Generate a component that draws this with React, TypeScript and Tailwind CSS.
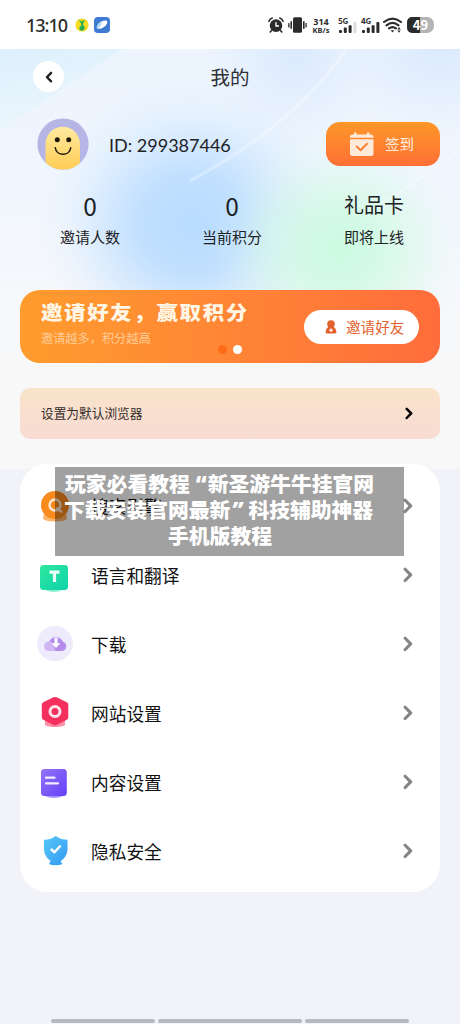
import type { ReactNode } from "react";

const Chevron = ({ className }: { className: string }) => (
  <svg viewBox="0 0 8 13" fill="none" stroke="currentColor" className={className}>
    <path d="M1.7 1.8L6.2 6.4L1.7 11" strokeWidth="2.5" strokeLinecap="round" strokeLinejoin="round" />
  </svg>
);

const SignalBars = ({ label, weak }: { label: string; weak?: boolean }) => (
  <div className="flex h-4 w-[19px] flex-col">
    <span className="h-[7px] text-[8px] leading-[7px] font-bold tracking-[-0.3px]">{label}</span>
    <svg viewBox="0 0 19 11" className="-mt-[2px] h-[11px] w-[19px]" fill="#2b2b2b">
      <rect x="1" y="8" width="3" height="3" rx="1" />
      <rect x="5.8" y="5.5" width="3" height="5.5" rx="1" />
      <rect x="10.6" y="3.2" width="3" height="7.8" rx="1" />
      <rect x="15.4" y="0" width="3" height="11" rx="1" fill={weak ? "#dcdcdc" : "#2b2b2b"} />
    </svg>
  </div>
);

const StatusBar = () => (
  <div className="flex h-[49px] items-center bg-white pt-[1px] pr-[26px] pl-[26px] text-[#2b2b2b]">
    <span className="w-[49px] font-['Noto_Sans','Noto_Sans_CJK_SC',sans-serif] text-[18px] leading-none font-medium tracking-[-1px]">
      13:10
    </span>
    <svg viewBox="0 0 14 14" className="h-[14px] w-[14px]">
      <circle cx="7" cy="7" r="6.6" fill="#f5dc22" />
      <path
        d="M3.6 1.6L6.6 3.4L10 1.6L8.6 4.6Q7.6 5.6 8.3 7.6Q10 8.4 9.7 10.6Q9 12.8 6.6 12.7Q4 12.2 4.2 9.8Q4.8 8 6.4 7.7L5.8 5Z"
        fill="#24ad54"
      />
    </svg>
    <svg viewBox="0 0 16 16" className="ml-[5px] h-4 w-4">
      <rect width="16" height="16" rx="4" fill="#3f7bd2" />
      <path d="M2.8 10.6C3.2 6.6 7.2 3.6 11.6 3.6C13.4 3.6 13.6 4.8 13 6.4C11.6 9.6 8.2 11.6 4.8 11.8C3.4 11.8 2.8 11.4 2.8 10.6Z" fill="#fff" />
      <path d="M2.8 10.6C3 8 5.4 5.6 8 5.2C7.6 8 6 10.4 3.4 11.6C3 11.4 2.8 11.2 2.8 10.6Z" fill="#a9dcfb" />
    </svg>
    <div className="ml-auto flex items-center">
      <svg viewBox="0 0 16 16" className="h-4 w-4" fill="none" stroke="#2b2b2b">
        <circle cx="8" cy="8.6" r="6.3" fill="#2b2b2b" stroke="none" />
        <path d="M0.9 4.2Q1.8 1.8 4.2 1M15.1 4.2Q14.2 1.8 11.8 1M3.8 13.2L2.2 15M12.2 13.2L13.8 15" strokeWidth="1.6" strokeLinecap="round" />
        <path d="M8 5.2V9H11" stroke="#fff" strokeWidth="1.4" />
      </svg>
      <svg viewBox="0 0 19 16" className="ml-[4px] h-4 w-[19px]" fill="#2b2b2b">
        <rect x="5" y="0.3" width="9" height="15.4" rx="1.5" />
        <rect x="2.4" y="4" width="1.6" height="8" rx="0.8" />
        <rect x="15" y="4" width="1.6" height="8" rx="0.8" />
        <rect x="0.2" y="6" width="1.3" height="4.5" rx="0.6" />
        <rect x="17.4" y="6" width="1.3" height="4.5" rx="0.6" />
      </svg>
      <div className="ml-[3px] w-[22px] text-center font-['Noto_Sans',sans-serif] font-bold">
        <div className="text-[9px] leading-[9px]">314</div>
        <div className="text-[7.5px] leading-[8px]">KB/s</div>
      </div>
      <div className="ml-[6px]">
        <SignalBars label="5G" weak />
      </div>
      <div className="ml-[4px]">
        <SignalBars label="4G" />
      </div>
      <svg viewBox="0 0 20 16" className="ml-[3px] h-4 w-5" fill="none" stroke="#2b2b2b" strokeWidth="2.1">
        <path d="M1 5Q9.5 -1.8 18 5M3.5 8.3Q9.5 3.6 15.5 8.3M6 11.4Q9.5 8.8 13 11.4" strokeLinecap="round" />
        <path d="M7.6 13.2H11.4L9.5 15.6Z" fill="#2b2b2b" stroke="none" />
        <path d="M14.3 12.4L16 10L17.7 12.4ZM14.3 13.4L16 15.8L17.7 13.4Z" fill="#2b2b2b" stroke="none" />
      </svg>
      <div className="ml-[4px] flex h-4 w-[27px] items-center justify-center rounded-l-[5px] rounded-r-[7px] bg-linear-to-r from-[#2b2b2b] from-48% to-[#b4b4b4] to-48% text-[13px] font-bold text-white">
        49
      </div>
    </div>
  </div>
);

const Stat = ({ value, label }: { value: ReactNode; label: string }) => (
  <div className="flex w-[142px] flex-col items-center text-[#1d2226]">
    <div className="flex h-[30px] items-center">{value}</div>
    <div className="mt-[3px] text-[15px] leading-[24px]">{label}</div>
  </div>
);

const HeaderBackdrop = () => (
  <svg viewBox="0 0 460 420" className="absolute inset-0 -z-10 h-[420px] w-[460px]">
    <defs>
      <linearGradient id="base" x1="0" y1="0" x2="0" y2="1">
        <stop offset="0" stopColor="#ecf4fe" />
        <stop offset="0.3" stopColor="#f0f6fe" />
        <stop offset="0.6" stopColor="#f6f8fb" />
        <stop offset="0.8" stopColor="#f8f8f8" />
      </linearGradient>
      <linearGradient id="corner" x1="0" y1="0" x2="0.3" y2="1">
        <stop offset="0" stopColor="#ddf0fc" />
        <stop offset="1" stopColor="#ecf6fd" />
      </linearGradient>
      <radialGradient id="blue">
        <stop offset="0" stopColor="#b8dcff" />
        <stop offset="0.35" stopColor="#bbddff" stopOpacity="0.88" />
        <stop offset="0.6" stopColor="#c2e0ff" stopOpacity="0.52" />
        <stop offset="0.8" stopColor="#cae4ff" stopOpacity="0.2" />
        <stop offset="1" stopColor="#d5e9ff" stopOpacity="0" />
      </radialGradient>
      <radialGradient id="green">
        <stop offset="0" stopColor="#cbfae0" />
        <stop offset="0.3" stopColor="#cffae3" stopOpacity="0.85" />
        <stop offset="0.6" stopColor="#d5fae6" stopOpacity="0.48" />
        <stop offset="0.8" stopColor="#dcfaec" stopOpacity="0.18" />
        <stop offset="1" stopColor="#e5faf0" stopOpacity="0" />
      </radialGradient>
      <radialGradient id="sky">
        <stop offset="0" stopColor="#dbe9fd" />
        <stop offset="0.5" stopColor="#e0edfd" stopOpacity="0.6" />
        <stop offset="1" stopColor="#e6f1fe" stopOpacity="0" />
      </radialGradient>
    </defs>
    <rect width="460" height="420" fill="url(#base)" />
    <path d="M0 0H122L0 82Z" fill="url(#corner)" />
    <ellipse cx="295" cy="5" rx="90" ry="100" fill="url(#sky)" />
    <ellipse cx="440" cy="0" rx="120" ry="90" fill="url(#sky)" />
    <ellipse cx="192" cy="175" rx="155" ry="145" fill="url(#blue)" />
    <ellipse cx="340" cy="200" rx="130" ry="120" fill="url(#green)" />
    <path d="M346 0Q300 72 190 132" fill="none" stroke="#fff" strokeOpacity="0.2" strokeWidth="4" />
    <path d="M346 0Q300 72 190 132" fill="none" stroke="#fff" strokeOpacity="0.2" strokeWidth="1.5" />
    <path d="M460 100Q430 125 375 158" fill="none" stroke="#fff" strokeOpacity="0.35" strokeWidth="2" />
  </svg>
);

const SearchIcon = () => (
  <svg viewBox="0 0 36 36" className="h-9 w-9">
    <path d="M7 25H29L30 31Q27 33.5 18 33.5T6 31Z" fill="#ffb46b" />
    <circle cx="18" cy="17" r="14" fill="#f98a1c" />
    <circle cx="18" cy="17" r="5.5" fill="none" stroke="#ffe9d2" strokeWidth="2.4" />
    <path d="M20 20.5L24 23.5" stroke="#ffe9d2" strokeWidth="2.4" strokeLinecap="round" />
  </svg>
);

const TranslateIcon = () => (
  <svg viewBox="0 0 36 36" className="h-9 w-9">
    <defs>
      <linearGradient id="mint" x1="0" y1="0" x2="1" y2="1">
        <stop offset="0" stopColor="#2ee79e" />
        <stop offset="1" stopColor="#0ed3ab" />
      </linearGradient>
    </defs>
    <path d="M6 31H28Q24 35 17 35T6 31Z" fill="#8ff0d2" />
    <rect x="3" y="8" width="28" height="25" rx="3.5" fill="url(#mint)" />
    <path d="M12.5 15.2H22.5M17.5 15.2V25" stroke="#eafff7" strokeWidth="3.2" />
  </svg>
);

const DownloadIcon = () => (
  <svg viewBox="0 0 36 36" className="h-9 w-9">
    <circle cx="18" cy="17.5" r="17.8" fill="#eeebfd" />
    <path d="M12 25V16A7.6 7.6 0 0 1 26 15.8A4.8 4.8 0 0 1 25.5 25Z" fill="#b68ceb" />
    <path d="M12 25A4.8 4.8 0 1 1 16.2 18L18.5 25Z" fill="#d1b6f5" />
    <path d="M19 11.8V19" stroke="#fff" strokeWidth="3" />
    <path d="M14.6 17.2H23.4L19 22Z" fill="#fff" />
  </svg>
);

const SiteIcon = () => (
  <svg viewBox="0 0 36 36" className="h-9 w-9">
    <path d="M8 25H28V30Q25 32 18 32T8 30Z" fill="#ff8fa6" />
    <path
      d="M16.4 2.3Q18 1.5 19.6 2.3L29.8 7.2Q31.3 8 31.3 9.7V22.3Q31.3 24 29.8 24.8L19.6 30.1Q18 31 16.4 30.1L6.3 24.8Q4.8 24 4.8 22.3V9.7Q4.8 8 6.3 7.2Z"
      fill="#f5305f"
    />
    <circle cx="18" cy="16.5" r="5" fill="none" stroke="#ffe3ea" strokeWidth="3" />
  </svg>
);

const ContentIcon = () => (
  <svg viewBox="0 0 36 36" className="h-9 w-9">
    <defs>
      <linearGradient id="violet" x1="0" y1="0" x2="1" y2="1">
        <stop offset="0" stopColor="#9375f8" />
        <stop offset="1" stopColor="#6440f8" />
      </linearGradient>
    </defs>
    <path d="M5 30H29Q24 34 17 34T5 30Z" fill="#a895ff" />
    <rect x="4" y="5" width="25.8" height="27" rx="3.5" fill="url(#violet)" />
    <path d="M9 13.7H17.5M9 19.3H21" stroke="#f2eeff" strokeWidth="2.2" strokeLinecap="round" />
  </svg>
);

const PrivacyIcon = () => (
  <svg viewBox="0 0 36 36" className="h-9 w-9">
    <defs>
      <linearGradient id="shield" x1="0" y1="0" x2="1" y2="1">
        <stop offset="0" stopColor="#55c8f7" />
        <stop offset="1" stopColor="#359af4" />
      </linearGradient>
    </defs>
    <path d="M14 27.5H23L25.5 31Q23 32.3 18.5 32.3T12 31Z" fill="#3da5f5" />
    <path d="M18.8 3Q23 6.5 30.5 6.8V17Q30 26 18.8 31Q7.5 26 7 17V6.8Q14.5 6.5 18.8 3Z" fill="url(#shield)" />
    <path d="M14.5 16.5L17.5 19.3L23 13.3" fill="none" stroke="#fff" strokeWidth="2.4" strokeLinecap="round" strokeLinejoin="round" />
  </svg>
);

const menuItems = [
  { label: "搜索引擎", icon: <SearchIcon /> },
  { label: "语言和翻译", icon: <TranslateIcon /> },
  { label: "下载", icon: <DownloadIcon /> },
  { label: "网站设置", icon: <SiteIcon /> },
  { label: "内容设置", icon: <ContentIcon /> },
  { label: "隐私安全", icon: <PrivacyIcon /> },
];

const App = () => {
  return (
    <div className="relative h-[1024px] w-[460px] overflow-hidden bg-[#f2f3f8] font-['Noto_Sans_CJK_SC',sans-serif]">
      <StatusBar />

      <header className="relative isolate h-[420px]">
        <HeaderBackdrop />

        {/* Title */}
        <div className="grid grid-cols-3 items-center px-[33px] pt-[12px]">
          <button className="flex h-[31px] w-[31px] items-center justify-center rounded-full bg-white text-[#222]">
            <Chevron className="h-3 w-2 rotate-180" />
          </button>
          <h1 className="text-center text-[19.5px] leading-[30px] text-[#2d3135]">我的</h1>
        </div>

        {/* Profile */}
        <div className="mt-[26px] flex items-center pr-[20px] pl-[37px]">
          <svg viewBox="0 0 52 52" className="h-[52px] w-[52px]">
            <defs>
              <clipPath id="face">
                <circle cx="26" cy="26" r="25.6" />
              </clipPath>
              <linearGradient id="skin" x1="0" y1="0" x2="0" y2="1">
                <stop offset="0" stopColor="#ffeaa0" />
                <stop offset="1" stopColor="#ffcc55" />
              </linearGradient>
            </defs>
            <g clipPath="url(#face)">
              <rect width="52" height="52" fill="#b5b5e6" />
              <path d="M8.5 52V26A17 17 0 0 1 43 26V52Z" fill="url(#skin)" />
            </g>
            <circle cx="20.3" cy="21.8" r="2.5" fill="#1d1708" />
            <circle cx="31.7" cy="21.8" r="2.5" fill="#1d1708" />
            <path d="M18.3 29.8C19.5 38.5 32.5 38.5 33.7 29.8" fill="none" stroke="#1d1708" strokeWidth="1.5" strokeLinecap="round" />
          </svg>
          <span className="mt-[2px] ml-[20px] font-['Lato','Noto_Sans_CJK_SC',sans-serif] text-[18px] leading-[26px] text-[#1d2226]">
            ID: 299387446
          </span>
          <button className="ml-auto flex h-11 w-[114px] items-center rounded-[14px] bg-linear-to-b from-[#fd9727] to-[#fe6f35] pl-6 text-[14.5px] text-[#fff0e2]">
            <svg viewBox="0 0 24 24" className="mr-[11px] h-6 w-6">
              <path
                d="M2.5 2.5H4V1.6A1.3 1.3 0 0 1 6.6 1.6V2.5H16.8V1.6A1.3 1.3 0 0 1 19.4 1.6V2.5H21Q23.5 2.5 23.5 5V5.8H0V5Q0 2.5 2.5 2.5Z"
                fill="#ffe9d9"
              />
              <path d="M0 7.2H23.5V21.5Q23.5 24 21 24H2.5Q0 24 0 21.5Z" fill="#ffe9d9" />
              <path d="M6.8 14.5L10.6 18.3L17 11.8" fill="none" stroke="#fa8235" strokeWidth="2" strokeLinecap="round" strokeLinejoin="round" />
            </svg>
            签到
          </button>
        </div>

        {/* Stats */}
        <div className="mt-[22px] flex pl-[19px]">
          <Stat value={<span className="-mt-[1px] text-[24.5px] leading-none">0</span>} label="邀请人数" />
          <Stat value={<span className="-mt-[1px] text-[24.5px] leading-none">0</span>} label="当前积分" />
          <Stat value={<span className="-mt-1 text-[20px] leading-none">礼品卡</span>} label="即将上线" />
        </div>

        {/* Invite banner */}
        <div className="relative mx-5 mt-[41px] flex h-[73px] items-center justify-between rounded-[20px] bg-linear-to-r from-[#ff9c2d] to-[#ff6c3b] pr-[21px] pl-[21px]">
          <div className="-mt-[6px]">
            <div className="origin-left scale-x-[1.1] text-[19.5px] leading-[26px] font-black tracking-[1.5px] whitespace-nowrap text-[#fff6e6]">
              邀请好友，赢取积分
            </div>
            <div className="mt-[3px] text-[12.2px] leading-[20px] text-[#ffcb98]">邀请越多，积分越高</div>
          </div>
          <button className="flex h-[34px] w-[115px] items-center rounded-full bg-white pl-[21px] text-[14.6px] text-[#e2622f]">
            <svg viewBox="0 0 12 14" className="mr-[9px] h-[14px] w-3" fill="#e2622f">
              <circle cx="6" cy="4" r="3.8" />
              <path d="M3.5 6.5H8.5Q11.5 9 11.5 12Q11.5 13.5 9.5 13.5H2.5Q0.5 13.5 0.5 12Q0.5 9 3.5 6.5Z" />
              <path d="M6 8.5V12M4.2 10.2H7.8" stroke="#fff" strokeWidth="1.2" />
            </svg>
            邀请好友
          </button>
          <div className="absolute bottom-[9px] left-[198px] flex gap-[6px]">
            <i className="h-[9px] w-[9px] rounded-full bg-[#ff6c17]" />
            <i className="h-[9px] w-[9px] rounded-full bg-white" />
          </div>
        </div>

        {/* Default browser */}
        <div className="mx-5 mt-[25px] flex h-[51px] items-center justify-between rounded-[10px] bg-linear-to-b from-[#f9e4ca] to-[#f8dbd3] pr-[27px] pl-[21px] text-[12.7px] text-[#332d2a]">
          <span className="-mt-[1px]">设置为默认浏览器</span>
          <Chevron className="h-[13px] w-2 text-black" />
        </div>
      </header>

      <main className="relative mx-5 -mt-[5px] h-[428px] rounded-[27px] bg-white pt-[7px]">
        {menuItems.map(({ label, icon }) => (
          <div key={label} className="flex h-[69px] items-center pr-[27px] pl-[17px]">
            {icon}
            <span className="ml-[18px] text-[17.7px] leading-[26px] text-[#111]">{label}</span>
            <Chevron className="ml-auto h-[16px] w-[10px] text-[#858585]" />
          </div>
        ))}
      </main>

      {/* Gesture bar */}
      <div className="mt-[127px] ml-[51px] flex gap-[3px]">
        <i className="h-1 w-[104px] rounded-sm bg-[#b8b9be]" />
        <i className="h-1 w-[144px] rounded-sm bg-[#b8b9be]" />
        <i className="h-1 w-[104px] rounded-sm bg-[#b8b9be]" />
      </div>

      <div className="absolute top-[467px] left-[55px] flex h-[89px] w-[349px] flex-col bg-black/37 pt-[3px] text-[20.8px] leading-[26px] font-black whitespace-nowrap text-white">
        <div className="flex h-[26px] pl-[10px]">
          玩家必看教程
          <span className="w-[18px] pr-[1px] text-right font-['Noto_Sans',sans-serif] text-[22px]">“</span>
          新圣游牛牛挂官网
        </div>
        <div className="flex h-[26px] pl-[9px]">
          下载安装官网最新
          <span className="w-[18px] pl-[1px] font-['Noto_Sans',sans-serif] text-[22px] italic">”</span>
          科技辅助神器
        </div>
        <div className="flex h-[26px] pl-[113px]">手机版教程</div>
      </div>
    </div>
  );
};

export default App;
